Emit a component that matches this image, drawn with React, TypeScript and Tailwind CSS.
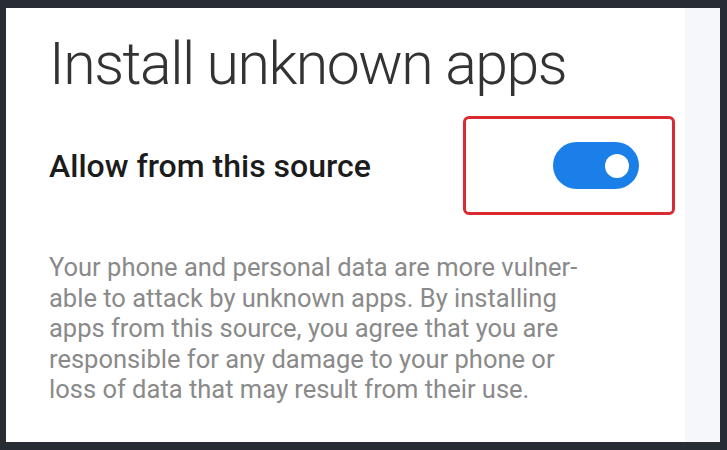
export default function App() {
  return (
    <div className="h-[450px] w-[727px] bg-[#272d33] pt-[8px] pb-[8px] pl-[6px] pr-[7px]">
      <div className="flex h-full bg-white" style={{ fontFamily: 'Roboto, "Noto Sans", sans-serif' }}>
        <div className="flex-1 pl-[43px]">
          <h1 className="mt-[24px] text-[59px] font-light leading-[64px] text-[#333333] tracking-[-1.5px]">
            Install unknown apps
          </h1>
          <div className="mt-[20px] flex items-center">
            <span className="w-[414px] text-[32px] font-medium text-[#1c1c1c]">
              Allow from this source
            </span>
            <div className="flex h-[99px] w-[212px] items-center justify-end rounded-[6px] border-[3px] border-[#d92b30] pr-[33px]">
              <div className="flex h-[47px] w-[86px] items-center justify-end rounded-full bg-[#1a7fe8] pr-[10px]">
                <div className="h-[24px] w-[24px] rounded-full bg-white" />
              </div>
            </div>
          </div>
          <p className="mt-[37px] whitespace-nowrap text-[25.5px] leading-[30.5px] text-[#8a8a8a]">
            Your phone and personal data are more vulner-
            <br />
            able to attack by unknown apps. By installing
            <br />
            apps from this source, you agree that you are
            <br />
            responsible for any damage to your phone or
            <br />
            loss of data that may result from their use.
          </p>
        </div>
        <div className="w-[35px] bg-[#f5f7fa]" />
      </div>
    </div>
  )
}
